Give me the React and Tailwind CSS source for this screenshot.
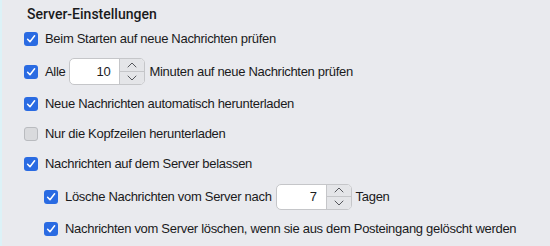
import React from "react";

function Check({ checked }) {
  if (!checked) {
    return (
      <span className="w-[14px] h-[14px] shrink-0 rounded-[3px] bg-[#d9dadd] border border-[#b9bbbf] box-border" />
    );
  }
  return (
    <span className="w-[14px] h-[14px] shrink-0 rounded-[3px] bg-[#2a6be2] flex items-center justify-center">
      <svg width="10" height="10" viewBox="0 0 10 10" fill="none">
        <path d="M1.6 5.2 L4 7.8 L8.6 1.8" stroke="white" strokeWidth="1.5" strokeLinecap="round" strokeLinejoin="round" />
      </svg>
    </span>
  );
}

function Stepper({ value, h }) {
  return (
    <span className={`flex ${h} rounded-[5px] border border-[#c5c6c9] bg-white overflow-hidden box-border`}>
      <span className="w-[49px] flex items-center justify-end pr-[9px] text-[#1d1d1f]">{value}</span>
      <span className="w-[25px] flex flex-col bg-[#e4e5e8] border-l border-[#c5c6c9]">
        <span className="flex-1 flex items-center justify-center border-b border-[#c5c6c9]">
          <svg width="10" height="6" viewBox="0 0 10 6" fill="none">
            <path d="M1 5 L5 1 L9 5" stroke="#55575c" strokeWidth="1" strokeLinecap="round" strokeLinejoin="round" />
          </svg>
        </span>
        <span className="flex-1 flex items-center justify-center">
          <svg width="10" height="6" viewBox="0 0 10 6" fill="none">
            <path d="M1 1 L5 5 L9 1" stroke="#55575c" strokeWidth="1" strokeLinecap="round" strokeLinejoin="round" />
          </svg>
        </span>
      </span>
    </span>
  );
}

export default function App() {
  return (
    <div
      className="w-[550px] h-[246px] flex bg-[#e9eaee] text-[13px] tracking-[-0.3px] text-[#1a1a1c] overflow-hidden"
      style={{ fontFamily: '"Liberation Sans", Arial, sans-serif' }}
    >
      <div className="w-[2px] bg-[#dcf2f7] shrink-0" />
      <div className="flex flex-col pl-[22px] pt-[4px]">
        <div
          className="h-[20px] leading-[20px] text-[14px] font-medium tracking-normal pl-[3px] text-[#1a1a1c]"
          style={{ fontFamily: "Roboto, sans-serif" }}
        >
          Server-Einstellungen
        </div>
        <div className="h-[30px] flex items-center gap-[7px]">
          <Check checked />
          <span>Beim Starten auf neue Nachrichten prüfen</span>
        </div>
        <div className="h-[35px] flex items-center gap-[7px]">
          <Check checked />
          <span className="flex items-center gap-[4px]">
            <span>Alle</span>
            <Stepper value="10" h="h-[27px]" />
            <span>Minuten auf neue Nachrichten prüfen</span>
          </span>
        </div>
        <div className="h-[30px] flex items-center gap-[7px]">
          <Check checked />
          <span>Neue Nachrichten automatisch herunterladen</span>
        </div>
        <div className="h-[30px] flex items-center gap-[7px]">
          <Check />
          <span>Nur die Kopfzeilen herunterladen</span>
        </div>
        <div className="h-[30px] flex items-center gap-[7px]">
          <Check checked />
          <span>Nachrichten auf dem Server belassen</span>
        </div>
        <div className="h-[35px] flex items-center gap-[7px] pl-[20px]">
          <Check checked />
          <span className="flex items-center gap-[4px]">
            <span>Lösche Nachrichten vom Server nach</span>
            <Stepper value="7" h="h-[26px]" />
            <span>Tagen</span>
          </span>
        </div>
        <div className="h-[30px] flex items-center gap-[7px] pl-[20px]">
          <Check checked />
          <span>Nachrichten vom Server löschen, wenn sie aus dem Posteingang gelöscht werden</span>
        </div>
      </div>
    </div>
  );
}
